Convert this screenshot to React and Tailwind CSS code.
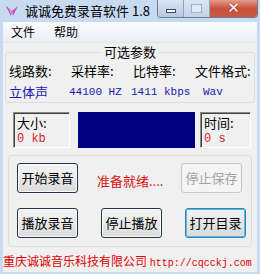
import React from "react";

const cjk = { fontFamily: '"SimSun","Noto Sans CJK SC",sans-serif' };
const mono = { fontFamily: '"Liberation Mono","Courier New",monospace' };

function AppIcon() {
  return (
    <svg width="14" height="12" viewBox="0 0 14 12">
      <path d="M1 1 L6 11 L7 6 Z" fill="#a23bb8" />
      <path d="M13 1 L8 11 L7 6 Z" fill="#d24fc7" />
      <path d="M3 3 L6 9 L6.5 6 Z" fill="#e9a6ea" />
    </svg>
  );
}

function WinButtons() {
  return (
    <div className="flex ml-auto mr-[2px] h-[18px] rounded-b-[4px] border border-t-0 border-[#6d7c93] overflow-hidden">
      <div className="w-[26px] flex items-center justify-center bg-gradient-to-b from-[#dbe6f3] to-[#b7c9e2] border-r border-[#8ea2be]">
        <div className="w-[10px] h-[4px] bg-white border border-[#3b4a60] mt-[5px]" />
      </div>
      <div className="w-[26px] flex items-center justify-center bg-gradient-to-b from-[#dce6f2] to-[#c3d2e6] border-r border-[#8ea2be]">
        <div className="w-[11px] h-[9px] border border-[#9fb1c8] bg-[#e3eaf3]" />
      </div>
      <div className="w-[47px] flex items-center justify-center bg-gradient-to-b from-[#e49c8e] via-[#c9503a] to-[#c75a45]">
        <span className="text-white text-[15px] font-bold leading-none [text-shadow:0_0_1px_#3a1a10]" style={{ fontFamily: '"DejaVu Sans",sans-serif' }}>✕</span>
      </div>
    </div>
  );
}

function Btn({ children, disabled, isDefault }) {
  return (
    <div
      className={
        "w-[61px] h-[30px] rounded-[3px] flex items-center justify-center text-[13px] " +
        (disabled
          ? "border border-[#c4c9ce] bg-[#f4f4f4] text-[#a3a3a3]"
          : isDefault
          ? "border border-[#3c7fb1] bg-gradient-to-b from-[#f2f2f2] to-[#d9d9d9] text-black shadow-[inset_0_0_0_1px_#48c1f0]"
          : "border border-[#1f3550] bg-gradient-to-b from-[#f4f4f4] to-[#dcdcdc] text-black shadow-[inset_0_0_0_1px_#fbfbfb]")
      }
      style={cjk}
    >
      {children}
    </div>
  );
}

export default function App() {
  return (
    <div className="w-[260px] h-[274px] bg-[#c8daf0] flex flex-col overflow-hidden" style={cjk}>
      {/* title bar */}
      <div className="h-[22px] flex items-start shrink-0">
        <div className="mt-[5px] ml-[5px]">
          <AppIcon />
        </div>
        <div className="ml-[6px] mt-[3px] text-[13px] leading-[16px] text-black">诚诚免费录音软件 1.8</div>
        <WinButtons />
      </div>

      {/* client */}
      <div className="flex-1 mx-[3px] mb-[4px] bg-[#f0f0f0] flex flex-col">
        {/* menu */}
        <div className="h-[21px] flex items-center gap-[19px] pl-[8px] text-[12px] bg-gradient-to-b from-[#fbfcfe] to-[#e9eef6] border-b border-[#dfe6ef]">
          <span>文件</span>
          <span>帮助</span>
        </div>

        {/* params group */}
        <div className="relative mt-[9px] mx-[2px] h-[51px] border border-[#d5dfe5] rounded-[3px]">
          <div className="absolute -top-[9px] left-0 right-0 flex justify-center">
            <span className="bg-[#f0f0f0] px-[3px] text-[13px] leading-[16px]">可选参数</span>
          </div>
          <div className="grid grid-cols-[62px_62px_62px_1fr] pl-[3px] pt-[10px] text-[13px] leading-[16px]">
            <span>线路数:</span>
            <span>采样率:</span>
            <span>比特率:</span>
            <span>文件格式:</span>
          </div>
          <div className="grid grid-cols-[62px_62px_62px_1fr] pl-[3px] pt-[5px] text-[#1a1ab0] leading-[16px]">
            <span className="text-[13px]">立体声</span>
            <span className="text-[11px] -ml-[2px]" style={mono}>44100 HZ</span>
            <span className="text-[11px] -ml-[2px]" style={mono}>1411 kbps</span>
            <span className="text-[11px] ml-[8px]" style={mono}>Wav</span>
          </div>
        </div>

        {/* status row */}
        <div className="flex mt-[9px] ml-[10px] items-start">
          <div className="w-[57px] h-[36px] border-t border-l border-[#8a8a8a] border-b border-r border-b-white border-r-white shadow-[inset_1px_1px_0_#404040] pl-[3px] pt-[2px]">
            <div className="text-[13px] leading-[15px]">大小:</div>
            <div className="text-[12px] text-[#d0202a] leading-[14px] mt-[2px]" style={mono}>0 kb</div>
          </div>
          <div className="w-[117px] h-[36px] ml-[8px] bg-[#000080]" />
          <div className="w-[51px] h-[36px] ml-[5px] border-t border-l border-[#8a8a8a] border-b border-r border-b-white border-r-white shadow-[inset_1px_1px_0_#404040] pl-[3px] pt-[2px]">
            <div className="text-[13px] leading-[15px]">时间:</div>
            <div className="text-[12px] text-[#d0202a] leading-[14px] mt-[2px]" style={mono}>0 s</div>
          </div>
        </div>

        {/* buttons group */}
        <div className="mt-[7px] mx-[5px] h-[92px] border border-[#d5dfe5] rounded-[4px] pl-[8px] pt-[7px]">
          <div className="flex items-center">
            <Btn>开始录音</Btn>
            <span className="ml-[19px] mt-[6px] w-[84px] text-[13px] text-[#e01010]">准备就绪....</span>
            <Btn disabled>停止保存</Btn>
          </div>
          <div className="flex items-center mt-[15px] gap-[23px]">
            <Btn>播放录音</Btn>
            <Btn>停止播放</Btn>
            <Btn isDefault>打开目录</Btn>
          </div>
        </div>

        {/* footer */}
        <div className="mt-[6px] text-[12px] leading-[16px] text-[#e00000] whitespace-nowrap">
          重庆诚诚音乐科技有限公司 <span className="text-[10px]" style={mono}>http://cqcckj.com</span>
        </div>
      </div>
    </div>
  );
}
